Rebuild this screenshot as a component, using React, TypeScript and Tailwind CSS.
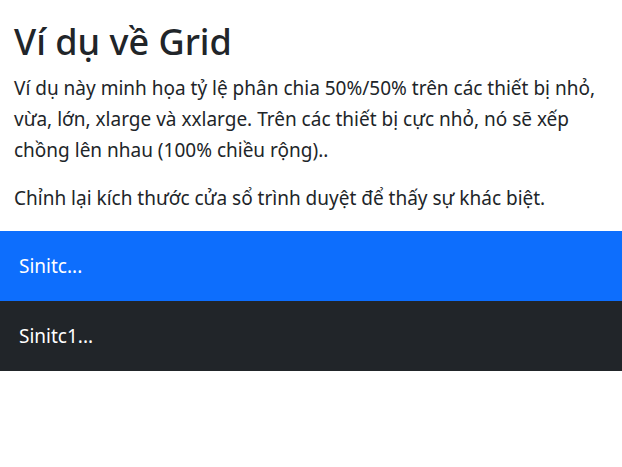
export default function App() {
  return (
    <div className="min-h-[467px] bg-white text-[#212529] font-['Noto_Sans','Open_Sans',sans-serif]">
      <div className="px-[14px] pt-[18px]">
        <h1 className="text-[36px] leading-[48px] font-medium mb-[7px]">Ví dụ về Grid</h1>
        <p className="text-[19px] leading-[31px] mb-[17px]">
          Ví dụ này minh họa tỷ lệ phân chia 50%/50% trên các thiết bị nhỏ, vừa, lớn, xlarge và xxlarge. Trên các thiết bị cực nhỏ, nó sẽ xếp chồng lên nhau (100% chiều rộng)..
        </p>
        <p className="text-[19px] leading-[31px] mb-[17px]">
          Chỉnh lại kích thước cửa sổ trình duyệt để thấy sự khác biệt.
        </p>
      </div>
      <div className="flex flex-col">
        <div className="bg-[#0d6efd] text-white text-[19px] leading-[30px] px-[19px] py-[20px]">Sinitc...</div>
        <div className="bg-[#212529] text-white text-[19px] leading-[30px] px-[19px] py-[20px]">Sinitc1...</div>
      </div>
    </div>
  );
}
